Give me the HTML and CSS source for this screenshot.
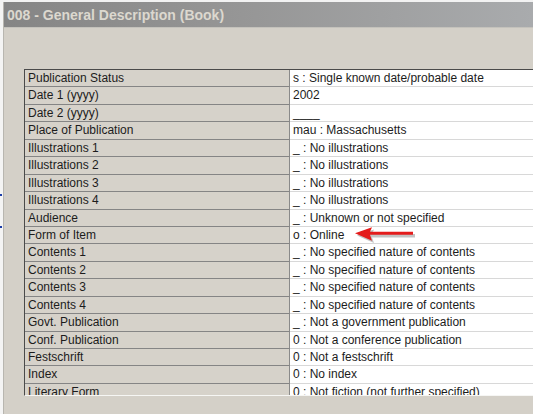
FILE: index.html
```html
<!DOCTYPE html>
<html>
<head>
<meta charset="utf-8">
<link rel="stylesheet" href="styles.css">
</head>
<body>
<div class="page">
  <div class="behind">
    <span class="dot"></span>
    <span class="dot"></span>
  </div>
  <div class="window">
    <div class="titlebar">008 - General Description (Book)</div>
    <div class="content">
      <div class="table">
        <div class="row"><div class="label">Publication Status</div><div class="value">s : Single known date/probable date</div></div>
        <div class="row"><div class="label">Date 1 (yyyy)</div><div class="value">2002</div></div>
        <div class="row"><div class="label">Date 2 (yyyy)</div><div class="value">____</div></div>
        <div class="row"><div class="label">Place of Publication</div><div class="value">mau : Massachusetts</div></div>
        <div class="row"><div class="label">Illustrations 1</div><div class="value">_ : No illustrations</div></div>
        <div class="row"><div class="label">Illustrations 2</div><div class="value">_ : No illustrations</div></div>
        <div class="row"><div class="label">Illustrations 3</div><div class="value">_ : No illustrations</div></div>
        <div class="row"><div class="label">Illustrations 4</div><div class="value">_ : No illustrations</div></div>
        <div class="row"><div class="label">Audience</div><div class="value">_ : Unknown or not specified</div></div>
        <div class="row"><div class="label">Form of Item</div><div class="value">o : Online</div></div>
        <div class="row"><div class="label">Contents 1</div><div class="value">_ : No specified nature of contents</div></div>
        <div class="row"><div class="label">Contents 2</div><div class="value">_ : No specified nature of contents</div></div>
        <div class="row"><div class="label">Contents 3</div><div class="value">_ : No specified nature of contents</div></div>
        <div class="row"><div class="label">Contents 4</div><div class="value">_ : No specified nature of contents</div></div>
        <div class="row"><div class="label">Govt. Publication</div><div class="value">_ : Not a government publication</div></div>
        <div class="row"><div class="label">Conf. Publication</div><div class="value">0 : Not a conference publication</div></div>
        <div class="row"><div class="label">Festschrift</div><div class="value">0 : Not a festschrift</div></div>
        <div class="row"><div class="label">Index</div><div class="value">0 : No index</div></div>
        <div class="row"><div class="label">Literary Form</div><div class="value">0 : Not fiction (not further specified)</div></div>
        <svg class="arrow" width="64" height="22" viewBox="0 0 64 22">
          <g fill="#7a7a7a" opacity="0.45" transform="translate(2,2)">
            <polygon points="2,7.5 19,1.5 17,6 60,6 60,9.5 17,9.5 19,15"/>
          </g>
          <polygon fill="#e41c1c" points="2,7.3 19,1.3 17,5.8 60,5.8 60,8.8 17,8.8 19,14.8"/>
        </svg>
      </div>
    </div>
  </div>
</div>
</body>
</html>
```
FILE: styles.css
```css
html, body {
  margin: 0;
  padding: 0;
  width: 533px;
  height: 414px;
  overflow: hidden;
  background: #f2f2f2;
}

.page {
  display: flex;
  width: 533px;
  height: 414px;
  padding-top: 2px;
  box-sizing: border-box;
  font-family: "Liberation Sans", Arial, sans-serif;
}

.behind {
  position: relative;
  width: 3px;
  flex: none;
  background: #f4f4f4;
}

.dot {
  position: absolute;
  left: 0;
  width: 2px;
  height: 2px;
  background: #1a3ca8;
}
.dot:nth-child(1) { top: 192px; }
.dot:nth-child(2) { top: 224px; }

.window {
  flex: 1;
  display: flex;
  flex-direction: column;
  background: #d4d0c8;
  border-left: 1px solid #b8b6b0;
  overflow: hidden;
}

.titlebar {
  height: 26px;
  flex: none;
  padding-left: 3px;
  box-sizing: border-box;
  background: linear-gradient(to right, #858585 0%, #969696 45%, #a9abad 100%);
  color: #dcd8cf;
  font-weight: bold;
  font-size: 14px;
  line-height: 27px;
  white-space: nowrap;
  border-bottom: 1px solid #c4c2bc;
}

.content {
  flex: 1;
  padding-top: 41px;
  padding-left: 20px;
}

.table {
  position: relative;
  width: 560px;
  height: 325px;
  overflow: hidden;
  border-top: 1px solid #4a4a4a;
  border-left: 1px solid #4a4a4a;
  border-bottom: 1px solid #f6f6f4;
  font-size: 12px;
  color: #1c1c1c;
}

.row {
  display: flex;
  height: 17.45px;
}

.label {
  width: 265px;
  flex: none;
  box-sizing: border-box;
  padding-left: 3px;
  background: #d6d2ca;
  border-right: 1px solid #8a8a8a;
  border-bottom: 1px solid #858585;
  line-height: 16px;
  white-space: nowrap;
}

.value {
  flex: 1;
  box-sizing: border-box;
  padding-left: 3px;
  background: #ffffff;
  border-bottom: 1px solid #d8d8d8;
  line-height: 16px;
  white-space: nowrap;
}

.arrow {
  position: absolute;
  left: 328px;
  top: 156px;
}
```
